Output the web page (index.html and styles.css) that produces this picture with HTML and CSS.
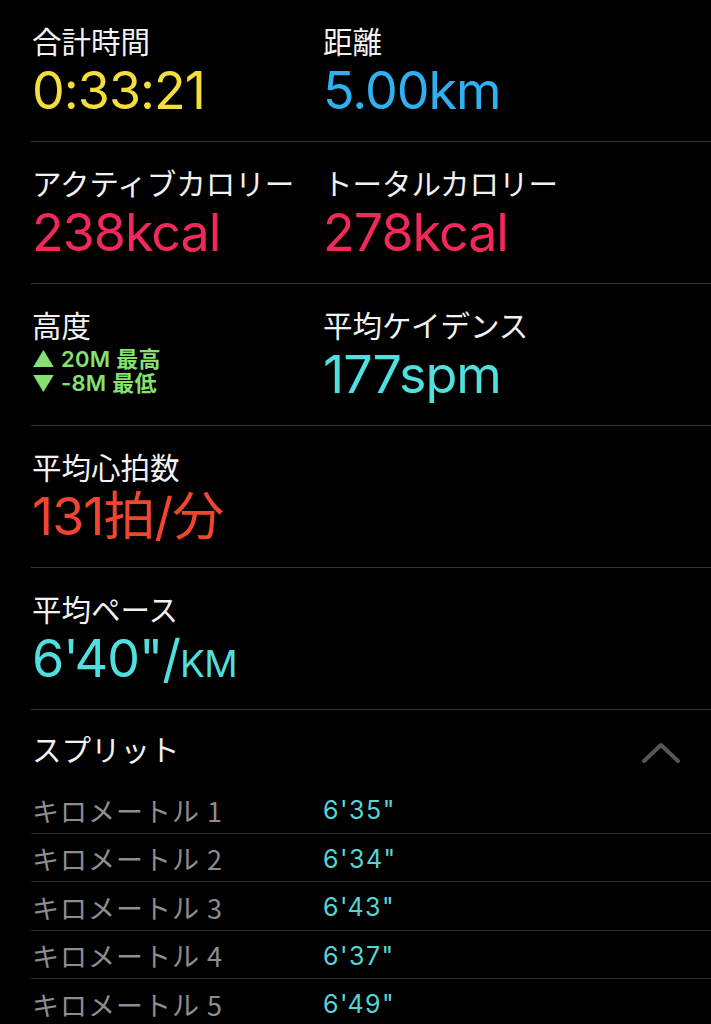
FILE: index.html
```html
<!DOCTYPE html>
<html lang="ja">
<head>
  <meta charset="UTF-8">
  <title>ワークアウト</title>
  <link rel="stylesheet" href="styles.css">
</head>
<body>
  <div class="summary">
    <div class="row">
      <div class="stat">
        <div class="label">合計時間</div>
        <div class="value yellow">0:33:21</div>
      </div>
      <div class="stat">
        <div class="label">距離</div>
        <div class="value blue">5.00km</div>
      </div>
    </div>

    <div class="row">
      <div class="stat">
        <div class="label">アクティブカロリー</div>
        <div class="value pink">238kcal</div>
      </div>
      <div class="stat">
        <div class="label">トータルカロリー</div>
        <div class="value pink">278kcal</div>
      </div>
    </div>

    <div class="row">
      <div class="stat">
        <div class="label">高度</div>
        <div class="elev">
          <div>▲ 20M 最高</div>
          <div>▼ -8M 最低</div>
        </div>
      </div>
      <div class="stat">
        <div class="label">平均ケイデンス</div>
        <div class="value cyan">177spm</div>
      </div>
    </div>

    <div class="row">
      <div class="stat">
        <div class="label">平均心拍数</div>
        <div class="value red">131拍/分</div>
      </div>
    </div>

    <div class="row">
      <div class="stat">
        <div class="label">平均ペース</div>
        <div class="value cyan">6'40"/<span class="unit">KM</span></div>
      </div>
    </div>

    <div class="splits">
      <div class="splits-head">
        <span class="label">スプリット</span>
        <svg class="chevron" width="40" height="24" viewBox="0 0 40 24">
          <path d="M3 20 L20 4 L37 20" fill="none" stroke="#56565a" stroke-width="4" stroke-linecap="round" stroke-linejoin="round"/>
        </svg>
      </div>
      <div class="split"><span class="km">キロメートル 1</span><span class="pace">6'35"</span></div>
      <div class="split"><span class="km">キロメートル 2</span><span class="pace">6'34"</span></div>
      <div class="split"><span class="km">キロメートル 3</span><span class="pace">6'43"</span></div>
      <div class="split"><span class="km">キロメートル 4</span><span class="pace">6'37"</span></div>
      <div class="split"><span class="km">キロメートル 5</span><span class="pace">6'49"</span></div>
    </div>
  </div>
</body>
</html>
```

FILE: styles.css
```css
body{
  margin: 0;
  background-color: #000000;
  color: #f2f2f2;
  font-family: Inter, "Noto Sans CJK JP", sans-serif;
  overflow: hidden;
}

.summary{
  padding-left: 31px;
}

.row{
  display: grid;
  grid-template-columns: 291px 1fr;
  height: 142px;
  border-bottom: 1px solid #333335;
  box-sizing: border-box;
}

.stat{
  padding-left: 1px;
  padding-top: 23px;
}

.label{
  font-family: "Noto Sans CJK JP", sans-serif;
  font-size: 29.5px;
  line-height: 34px;
  color: #f2f2f2;
  white-space: nowrap;
}

.value{
  margin-top: 2px;
  font-size: 52px;
  line-height: 64px;
  letter-spacing: -1px;
  white-space: nowrap;
}

.unit{
  font-size: 37px;
  letter-spacing: -0.5px;
}

.yellow{ color: #f4de3b; }
.blue{ color: #2fb0f0; }
.pink{ color: #f1295b; }
.red{ color: #f1452f; }
.cyan{ color: #4fdfdf; }

.elev{
  margin-top: 6px;
  font-family: Inter, "Noto Sans CJK JP", sans-serif;
  font-weight: 600;
  font-size: 22px;
  line-height: 24px;
  letter-spacing: 0.3px;
  color: #86e170;
}

.splits-head{
  display: flex;
  justify-content: space-between;
  align-items: center;
  height: 75px;
  padding-left: 1px;
  padding-right: 30px;
}

.chevron{
  margin-top: 10px;
}

.split{
  display: grid;
  grid-template-columns: 291px 1fr;
  align-items: center;
  height: 48.5px;
  padding-top: 3px;
  border-bottom: 1px solid #2c2c2e;
  box-sizing: border-box;
  padding-left: 1px;
}

.km{
  font-family: "Noto Sans CJK JP", sans-serif;
  font-size: 27px;
  letter-spacing: 1px;
  color: #8d8d91;
}

.pace{
  font-family: Inter, sans-serif;
  font-size: 25px;
  letter-spacing: 1.5px;
  color: #55d6d6;
}
```
